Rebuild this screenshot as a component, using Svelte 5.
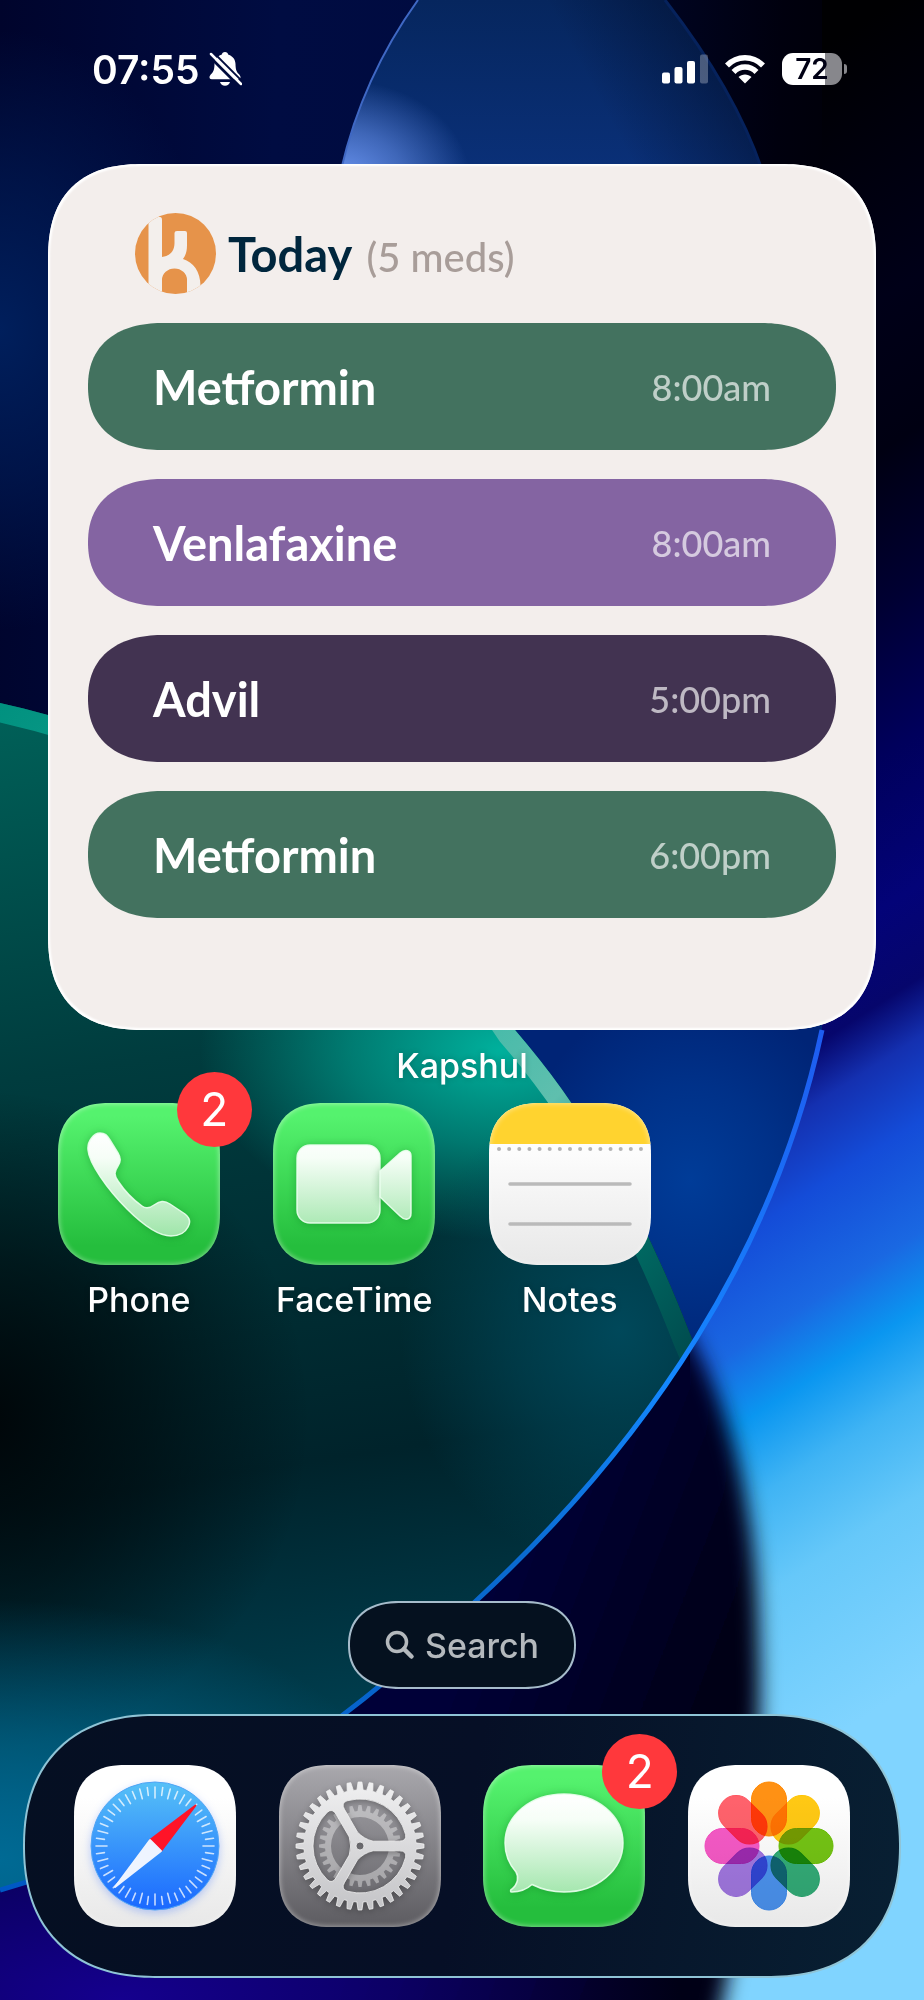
<script lang="ts">
  type Med = { name: string; time: string; iso: string; tone: string };
  type App = { id: string; label: string; badge?: number };

  const meds: Med[] = [
    { name: 'Metformin', time: '8:00am', iso: '08:00', tone: 'green' },
    { name: 'Venlafaxine', time: '8:00am', iso: '08:00', tone: 'purple' },
    { name: 'Advil', time: '5:00pm', iso: '17:00', tone: 'plum' },
    { name: 'Metformin', time: '6:00pm', iso: '18:00', tone: 'green' }
  ];

  const homeApps: App[] = [
    { id: 'phone', label: 'Phone', badge: 2 },
    { id: 'facetime', label: 'FaceTime' },
    { id: 'notes', label: 'Notes' }
  ];

  const dockApps: App[] = [
    { id: 'safari', label: 'Safari' },
    { id: 'settings', label: 'Settings' },
    { id: 'messages', label: 'Messages', badge: 2 },
    { id: 'photos', label: 'Photos' }
  ];

  // clockwise from the top
  const petals = ['#ff8800', '#ffc400', '#69c000', '#22a66c', '#3d8bf0', '#9a6ce0', '#f64cc2', '#ff5560'];

  // Soft patches of light on the wallpaper
  const glows = [
    { id: 'glowBlue', color: '#001f5c' },
    { id: 'glowSky', color: '#6a94f0' },
    { id: 'glowBlack', color: '#000508' },
    { id: 'glowMint', color: '#00b09c' },
    { id: 'glowTeal', color: '#00485a' },
    { id: 'glowSea', color: '#006a94' },
    { id: 'glowRoyal', color: '#003c98' },
    { id: 'glowViolet', color: '#15008e' }
  ];

  const range = (n: number) => Array.from({ length: n }, (_, i) => i);

  // Point at radius r and angle a (degrees) around the icon centre
  function polar(r: number, a: number) {
    const rad = (a * Math.PI) / 180;
    return `${(81 + r * Math.cos(rad)).toFixed(2)} ${(81 + r * Math.sin(rad)).toFixed(2)}`;
  }

  function gearTeeth(count: number, root: number, tip: number) {
    const step = 360 / count;
    const parts = range(count).map((i) => {
      const a = i * step;
      return [
        polar(root, a - step * 0.32),
        polar(tip, a - step * 0.17),
        polar(tip, a + step * 0.17),
        polar(root, a + step * 0.32)
      ].join(' L');
    });
    return `M${parts.join(' L')}Z`;
  }

  // The openings between the three spokes
  function gearWindow(start: number) {
    const p = (r: number, a: number) => polar(r, start + a);
    return (
      `M${p(14, 20)} L${p(40, 7)} Q${p(47, 6)} ${p(47, 14)} ` +
      `A47 47 0 0 1 ${p(47, 106)} Q${p(47, 114)} ${p(40, 113)} ` +
      `L${p(14, 100)} Q${p(8, 60)} ${p(14, 20)}Z`
    );
  }

  function circlePath(r: number) {
    return `M${81 - r} 81a${r} ${r} 0 1 0 ${2 * r} 0a${r} ${r} 0 1 0 ${-2 * r} 0Z`;
  }

  const outerGear = gearTeeth(36, 56, 64) + [0, 120, 240].map(gearWindow).join('') + circlePath(4);
  const innerGear = gearTeeth(28, 35, 41) + circlePath(29);
</script>

{#snippet appIcon(app: App)}
  <span class="icon-wrap">
    <svg class="icon {app.id}" viewBox="0 0 162 162" aria-hidden="true">
      {#if app.id === 'phone'}
        <path
          class="glass"
          d="M30 47C29 38 36 30 42 30C47 30 49 32 52 37L60 50C63 55 63 59 60 63C56 69 56 72 60 78C66 87 74 96 84 103C88 106 92 105 96 102C102 98 106 97 112 101L127 111C132 115 133 119 130 124C127 130 121 133 113 133C101 133 84 121 69 106C49 86 31 60 30 47Z"
        />
      {:else if app.id === 'facetime'}
        <rect class="glass" x="24" y="42" width="83" height="78" rx="13" />
        <path class="glass" d="M107 68L127 50C132 46 138 47 138 53V110C138 117 132 118 127 113L107 94Z" />
      {:else if app.id === 'notes'}
        <rect width="162" height="41" fill="#ffd32f" />
        {#each range(15) as i}
          <circle cx={10 + i * 10.14} cy="46" r="2" fill="#b4b4b4" />
        {/each}
        <path d="M21 81H141M21 121H141" stroke="#bababa" stroke-width="3.5" stroke-linecap="round" />
      {:else if app.id === 'safari'}
        <circle class="compass" cx="81" cy="81" r="64" fill="url(#compass)" stroke="#4fa4f5" />
        {#each range(48) as i}
          <line
            x1="81"
            x2="81"
            y1="22"
            y2={i % 12 === 0 ? 33 : i % 2 === 0 ? 32 : 30}
            stroke="#fff"
            stroke-opacity="0.75"
            stroke-width="1.6"
            stroke-linecap="round"
            transform="rotate({i * 7.5} 81 81)"
          />
        {/each}
        <g stroke-linejoin="round" stroke-width="2">
          <path d="M121.5 40.5L76 75L87 86Z" fill="#ff1428" stroke="#ff1428" />
          <path d="M41 122L76 75L87 86Z" fill="#eef4ff" stroke="#eef4ff" />
        </g>
      {:else if app.id === 'settings'}
        <path d={innerGear} fill="#fff" fill-opacity="0.38" fill-rule="evenodd" />
        <path
          class="gear"
          d={outerGear}
          fill="url(#metal)"
          fill-rule="evenodd"
          stroke="#f2f2f2"
          stroke-opacity="0.8"
          stroke-linejoin="round"
        />
      {:else if app.id === 'messages'}
        <path
          class="glass"
          d="M81 29C114 29 140 50 140 78C140 105 114 127 81 127C69 127 58 124 49 119.5C43 125 35 127 29 127C27 127 27 125 29 124C35 119 36 112 33 107C26 99 22 90 22 78C22 50 48 29 81 29Z"
        />
      {:else if app.id === 'photos'}
        {#each petals as color, i}
          <rect
            class="petal"
            x="63.5"
            y="17"
            width="35"
            height="54"
            rx="17.5"
            fill={color}
            stroke={color}
            transform="rotate({i * 45} 81 81)"
          />
        {/each}
      {/if}
    </svg>
    {#if app.badge}
      <span class="badge">{app.badge}</span>
    {/if}
  </span>
{/snippet}

<main class="screen">
  <svg class="wallpaper" viewBox="0 0 924 2000" preserveAspectRatio="none" aria-hidden="true">
    <defs>
      {#each glows as glow}
        <radialGradient id={glow.id}>
          <stop offset="0" stop-color={glow.color} />
          <stop offset="0.5" stop-color={glow.color} stop-opacity="0.55" />
          <stop offset="1" stop-color={glow.color} stop-opacity="0" />
        </radialGradient>
      {/each}
      <linearGradient id="sky" x1="0" y1="0" x2="1" y2="0.1">
        <stop offset="0" stop-color="#00042c" />
        <stop offset="0.3" stop-color="#000c42" />
        <stop offset="0.5" stop-color="#000b40" />
        <stop offset="0.84" stop-color="#00000e" />
        <stop offset="1" stop-color="#000002" />
      </linearGradient>
      <linearGradient id="petal" x1="0" y1="0" x2="0" y2="1">
        <stop offset="0" stop-color="#06265e" />
        <stop offset="1" stop-color="#0a3078" />
      </linearGradient>
      <linearGradient id="petalFade" x1="0" y1="0.2" x2="1" y2="0">
        <stop offset="0.5" stop-color="#00081e" stop-opacity="0" />
        <stop offset="1" stop-color="#00081e" stop-opacity="0.75" />
      </linearGradient>
      <linearGradient id="teal" x1="0.2" y1="0" x2="0.3" y2="1">
        <stop offset="0" stop-color="#006058" />
        <stop offset="0.3" stop-color="#003c3e" />
        <stop offset="0.65" stop-color="#00232b" />
        <stop offset="0.85" stop-color="#003c4c" />
        <stop offset="1" stop-color="#00507a" />
      </linearGradient>
      <linearGradient id="rim" gradientUnits="userSpaceOnUse" x1="0" y1="700" x2="690" y2="1340">
        <stop offset="0" stop-color="#00917f" />
        <stop offset="0.58" stop-color="#3fb9a8" />
        <stop offset="0.72" stop-color="#5fbfae" />
        <stop offset="0.85" stop-color="#007268" />
        <stop offset="1" stop-color="#004e50" />
      </linearGradient>
      <linearGradient id="line" gradientUnits="userSpaceOnUse" x1="820" y1="1030" x2="0" y2="1890">
        <stop offset="0" stop-color="#1e5cf0" />
        <stop offset="0.3" stop-color="#1488ff" />
        <stop offset="0.5" stop-color="#0a6ad0" />
        <stop offset="1" stop-color="#0058c4" />
      </linearGradient>
      <linearGradient id="right" gradientUnits="userSpaceOnUse" x1="262" y1="408" x2="1034" y2="1608">
        <stop offset="0" stop-color="#000002" />
        <stop offset="0.17" stop-color="#000018" />
        <stop offset="0.26" stop-color="#000012" />
        <stop offset="0.35" stop-color="#000032" />
        <stop offset="0.44" stop-color="#00005c" />
        <stop offset="0.53" stop-color="#030378" />
        <stop offset="0.585" stop-color="#06066c" />
        <stop offset="0.62" stop-color="#1430b0" />
        <stop offset="0.67" stop-color="#144cd8" />
        <stop offset="0.735" stop-color="#1a68e2" />
        <stop offset="0.78" stop-color="#0a96f0" />
        <stop offset="0.83" stop-color="#40b4f4" />
        <stop offset="0.89" stop-color="#66c8f9" />
        <stop offset="1" stop-color="#80d4ff" />
      </linearGradient>
      <linearGradient id="night" gradientUnits="userSpaceOnUse" x1="480" y1="1600" x2="740" y2="1700">
        <stop offset="0" stop-color="#000038" />
        <stop offset="1" stop-color="#000014" />
      </linearGradient>
      <linearGradient id="compass" x1="0" y1="0" x2="0" y2="1">
        <stop offset="0" stop-color="#56c1f7" />
        <stop offset="1" stop-color="#1a68ff" />
      </linearGradient>
      <linearGradient id="metal" x1="0" y1="0" x2="0" y2="1">
        <stop offset="0" stop-color="#f0f0f1" />
        <stop offset="1" stop-color="#c4c4c7" />
      </linearGradient>
      <linearGradient id="glassFill" gradientUnits="userSpaceOnUse" x1="0" y1="30" x2="0" y2="130">
        <stop offset="0" stop-color="#fff" />
        <stop offset="0.25" stop-color="#f6fef7" />
        <stop offset="1" stop-color="#a2e6ac" />
      </linearGradient>
      <filter id="edge" x="-20%" y="-20%" width="140%" height="140%"><feGaussianBlur stdDeviation="10" /></filter>
      <clipPath id="petalClip"><path d="M418 0C382 50 356 105 341 170H762C740 105 700 45 665 0Z" /></clipPath>
      <clipPath id="inside"><path d="M0 600V1890C180 1840 330 1740 477 1600C650 1440 775 1250 822 1030V600Z" /></clipPath>
      <clipPath id="outside"><path d="M0 1890C180 1840 330 1740 477 1600C650 1440 775 1250 822 1030V0H924V2000H0Z" /></clipPath>
      <clipPath id="tealClip"><path d="M0 703C210 750 410 870 515 1030C600 1128 652 1236 690 1334L760 1500V1900H0Z" /></clipPath>
    </defs>

    <rect width="924" height="2000" fill="url(#sky)" />
    <ellipse cx="0" cy="330" rx="220" ry="300" fill="url(#glowBlue)" />

    <g clip-path="url(#petalClip)">
      <rect x="330" width="450" height="170" fill="url(#petal)" />
      <ellipse cx="340" cy="180" rx="130" ry="100" fill="url(#glowSky)" />
      <rect x="330" width="450" height="170" fill="url(#petalFade)" />
    </g>
    <path d="M418 0C382 50 356 105 341 170" fill="none" stroke="#3f68c4" stroke-width="2" />
    <path d="M665 0C700 45 740 105 762 170" fill="none" stroke="#06225c" stroke-width="3" />

    <g clip-path="url(#inside)">
      <rect x="400" y="1000" width="450" height="500" fill="#002476" />
      <ellipse cx="690" cy="1180" rx="170" ry="190" fill="url(#glowRoyal)" />
      <g clip-path="url(#tealClip)">
        <rect y="690" width="800" height="1210" fill="url(#teal)" />
        <ellipse cx="-20" cy="1420" rx="330" ry="330" fill="url(#glowBlack)" />
        <ellipse cx="500" cy="1050" rx="300" ry="190" fill="url(#glowMint)" />
        <ellipse cx="620" cy="1330" rx="220" ry="240" fill="url(#glowTeal)" />
        <ellipse cx="0" cy="1860" rx="420" ry="260" fill="url(#glowSea)" />
        <path d="M0 703C210 750 410 870 515 1030C600 1128 652 1236 690 1334L760 1500" fill="none" stroke="url(#rim)" stroke-width="38" />
      </g>
    </g>

    <g clip-path="url(#outside)">
      <rect x="690" width="234" height="2000" fill="url(#right)" />
      <path d="M-80 1700L600 1200L686 1330C728 1400 757 1500 759 1640C764 1760 750 1900 700 2100H-80Z" fill="url(#night)" filter="url(#edge)" />
      <ellipse cx="120" cy="2000" rx="560" ry="230" fill="url(#glowViolet)" />
    </g>
    <path d="M0 1890C180 1840 330 1740 477 1600C650 1440 775 1250 822 1030" fill="none" stroke="url(#line)" stroke-width="5" />
  </svg>

  <header class="status">
    <div class="status-left">
      <time datetime="07:55">07:55</time>
      <svg width="34" height="36" viewBox="0 0 34 36" role="img" aria-label="Silent mode">
        <path d="M17 1c-1.800 0-3 1.200-3.400 2.700C9 5 6.600 8.800 6.500 13c-.1 5-.8 7.500-3 9.800C2.400 24 1.500 25 1.500 26.300c0 1.200.8 2 2.200 2h26.600c1.400 0 2.200-.8 2.200-2 0-1.300-.9-2.300-2-3.500-2.200-2.300-2.900-4.800-3-9.800-.1-4.200-2.500-8-7.100-9.300C20 2.200 18.800 1 17 1Z" fill="#fff" />
        <path d="M12 31c.6 2.300 2.500 3.800 5 3.800s4.400-1.500 5-3.800Z" fill="#fff" />
        <path d="M1 5L32 36" stroke="#000b3c" stroke-width="3" />
        <path d="M3 3L33 33" stroke="#fff" stroke-width="2.500" stroke-linecap="round" />
        <path d="M5.500 1.500L34 30" stroke="#000b3c" stroke-width="1.800" />
      </svg>
    </div>
    <div class="status-right">
      <svg width="46" height="30" viewBox="0 0 46 30" role="img" aria-label="Signal">
        <rect y="18.500" width="8" height="11" rx="2" fill="#fff" />
        <rect x="12.500" y="13" width="8" height="16.500" rx="2" fill="#fff" />
        <rect x="25" y="7" width="8" height="22.500" rx="2" fill="#fff" />
        <rect x="38" y="0.500" width="8" height="29" rx="2" fill="#fff" fill-opacity="0.28" />
      </svg>
      <svg width="40" height="30" viewBox="0 0 40 30" role="img" aria-label="Wi-Fi">
        <g fill="none" stroke="#fff" stroke-width="5.500">
          <path d="M2 11.500C12 1.200 28 1.200 38 11.500" />
          <path d="M8.500 18C15 11.300 25 11.300 31.500 18" />
        </g>
        <path d="M20 29.500L13.500 23C17 19.500 23 19.500 26.500 23Z" fill="#fff" />
      </svg>
      <span class="battery"><span class="level">72</span></span>
    </div>
  </header>

  <section class="widget" aria-label="Kapshul">
    <div class="widget-head">
      <svg width="81" height="81" viewBox="0 0 81 81" aria-hidden="true">
        <clipPath id="logoClip"><circle cx="40.500" cy="40.500" r="40.500" /></clipPath>
        <g clip-path="url(#logoClip)">
          <rect width="81" height="81" fill="#e6934a" />
          <path
            d="M13.500 0H22V4H25Q27 4 27 7V44C35 43 39.500 38 39.500 30V20Q39.500 18 42 18H50Q52 18 52 20V32C52 38 51 42 48 46C58 49 65.500 58 65.500 73V81H52V67A12.500 11.500 0 0 0 27 67V81H13.500Z"
            fill="#f3efec"
          />
        </g>
      </svg>
      <h1>Today <span>(5 meds)</span></h1>
    </div>
    <ul class="meds">
      {#each meds as med}
        <li class={med.tone}>
          <span class="name">{med.name}</span>
          <time datetime={med.iso}>{med.time}</time>
        </li>
      {/each}
    </ul>
  </section>
  <p class="label widget-label">Kapshul</p>

  <div class="apps">
    {#each homeApps as app}
      <button class="app">
        {@render appIcon(app)}
        <span class="label">{app.label}</span>
      </button>
    {/each}
  </div>

  <button class="search">
    <svg width="30" height="30" viewBox="0 0 30 30" aria-hidden="true">
      <circle cx="12" cy="12" r="9.500" fill="none" stroke="#b4b9bd" stroke-width="3.500" />
      <path d="M19 19L26.500 26.500" stroke="#b4b9bd" stroke-width="4.500" stroke-linecap="round" />
    </svg>
    Search
  </button>

  <nav class="dock" aria-label="Dock">
    {#each dockApps as app}
      <button class="app" aria-label={app.label}>
        {@render appIcon(app)}
      </button>
    {/each}
  </nav>
</main>

<style>
  :global(body) {
    margin: 0;
    background: #000b40;
  }

  .screen {
    position: relative;
    display: flex;
    flex-direction: column;
    min-height: 100vh;
    box-sizing: border-box;
    padding-bottom: 22px;
    overflow: hidden;
    color: #fff;
    font-family: Inter, 'Liberation Sans', sans-serif;
    isolation: isolate;
  }

  .wallpaper {
    position: absolute;
    inset: 0;
    width: 100%;
    height: 100%;
    z-index: -1;
  }

  button {
    border: 0;
    padding: 0;
    background: none;
    color: inherit;
    font: inherit;
    cursor: pointer;
  }

  /* Status bar */
  .status {
    display: flex;
    justify-content: space-between;
    align-items: center;
    height: 64px;
    padding: 37px 82px 63px 92px;
  }

  .status-left,
  .status-right {
    display: flex;
    align-items: center;
  }

  .status-left {
    gap: 8px;
    font-size: 39px;
    font-weight: 600;
  }

  .status-right {
    gap: 17px;
  }

  .battery {
    position: relative;
    display: flex;
    width: 60px;
    height: 32px;
    border-radius: 11px;
    background: linear-gradient(90deg, #fff 72%, #87878c 72%);
  }

  .battery::after {
    content: '';
    position: absolute;
    right: -5px;
    top: 11px;
    width: 3px;
    height: 10px;
    border-radius: 0 4px 4px 0;
    background: #87878c;
  }

  .level {
    flex: 1;
    color: #000014;
    font-size: 28px;
    font-weight: 600;
    line-height: 32px;
    text-align: center;
  }

  /* Medication widget */
  .widget {
    margin: 0 48px;
    padding: 49px 40px 112px;
    border-radius: 84px;
    background: #f3eeec;
    box-shadow: inset 0 0 2px 2px #fff;
    font-family: Lato, 'Open Sans', sans-serif;
  }

  .widget-head {
    display: flex;
    align-items: center;
    gap: 12px;
    height: 81px;
    margin: 0 0 29px 47px;
  }

  h1 {
    margin: 4px 0 0;
    color: #00263d;
    font-size: 47px;
    font-weight: 700;
    line-height: 56px;
  }

  h1 span {
    color: #a89d99;
    font-size: 40px;
    font-weight: 500;
    margin-left: 4px;
  }

  .meds {
    display: flex;
    flex-direction: column;
    gap: 29px;
    margin: 0;
    padding: 0;
    list-style: none;
  }

  .meds li {
    display: flex;
    justify-content: space-between;
    align-items: center;
    height: 127px;
    padding: 0 65px;
    border-radius: 64px;
  }

  .name {
    font-size: 47px;
    font-weight: 700;
  }

  .meds time {
    color: rgba(255, 255, 255, 0.66);
    font-size: 36px;
    font-weight: 500;
  }

  .green {
    background: #43725f;
  }

  .purple {
    background: #8464a2;
  }

  .plum {
    background: #423351;
  }

  .label {
    font-size: 34px;
    font-weight: 500;
    line-height: 40px;
    text-align: center;
    text-shadow: 0 0 6px rgba(0, 0, 0, 0.2);
  }

  .widget-label {
    margin: 16px 0 17px;
  }

  /* App grid */
  .apps {
    display: grid;
    grid-template-columns: repeat(4, 1fr);
    padding: 0 31px;
  }

  .app {
    display: flex;
    flex-direction: column;
    align-items: center;
    gap: 15px;
  }

  .icon-wrap {
    position: relative;
    width: 162px;
    height: 162px;
  }

  .icon {
    display: block;
    width: 162px;
    height: 162px;
    border-radius: 44px;
  }

  .icon-wrap::after {
    content: '';
    position: absolute;
    inset: 0;
    border-radius: 44px;
    box-shadow: inset 0 0 5px 1px rgba(255, 255, 255, 0.4);
  }

  .phone,
  .facetime,
  .messages {
    background: linear-gradient(#55f26e 8%, #25be3d 88%);
  }

  .notes,
  .safari,
  .photos {
    background: linear-gradient(#fff 20%, #e8e8e8);
  }

  .settings {
    background: linear-gradient(#a9a8ad, #5d5c61);
  }

  .glass {
    fill: url(#glassFill);
    stroke: rgba(235, 255, 238, 0.9);
    stroke-width: 1.5;
    filter: drop-shadow(0 1px 4px rgba(0, 110, 20, 0.35));
  }

  .gear {
    filter: drop-shadow(0 2px 3px rgba(0, 0, 0, 0.3));
  }

  .compass {
    filter: drop-shadow(0 3px 4px rgba(40, 100, 255, 0.3));
  }

  .petal {
    mix-blend-mode: multiply;
    fill-opacity: 0.92;
  }

  .badge {
    position: absolute;
    top: -31px;
    right: -32px;
    z-index: 1;
    width: 75px;
    height: 75px;
    border-radius: 50%;
    background: #ff383c;
    font-size: 46px;
    line-height: 75px;
    text-align: center;
  }

  .search {
    display: flex;
    align-items: center;
    align-self: center;
    gap: 10px;
    box-sizing: border-box;
    height: 88px;
    margin-top: auto;
    padding: 0 35px;
    border: 2px solid #a6bccb;
    border-radius: 44px;
    background: #05111f;
    color: #b4b9bd;
    font-size: 34px;
    font-weight: 500;
  }

  .dock {
    display: flex;
    justify-content: space-between;
    margin: 25px 23px 0;
    padding: 49px;
    border: 2px solid #8fc4d6;
    border-radius: 110px;
    background: linear-gradient(100deg, #050f22, #060f26 50%, #082033);
  }

  /* Continuous corners where the browser can draw them */
  @supports (corner-shape: superellipse(1.3)) {
    .widget {
      border-radius: 96px;
      corner-shape: superellipse(1.3);
    }

    .icon,
    .icon-wrap::after {
      border-radius: 52px;
      corner-shape: superellipse(1.3);
    }

    .meds li {
      border-radius: 76px / 64px;
      corner-shape: superellipse(1.2);
    }

    .search {
      border-radius: 52px / 44px;
      corner-shape: superellipse(1.2);
    }

    .dock {
      border-radius: 132px;
      corner-shape: superellipse(1.2);
    }
  }
</style>
